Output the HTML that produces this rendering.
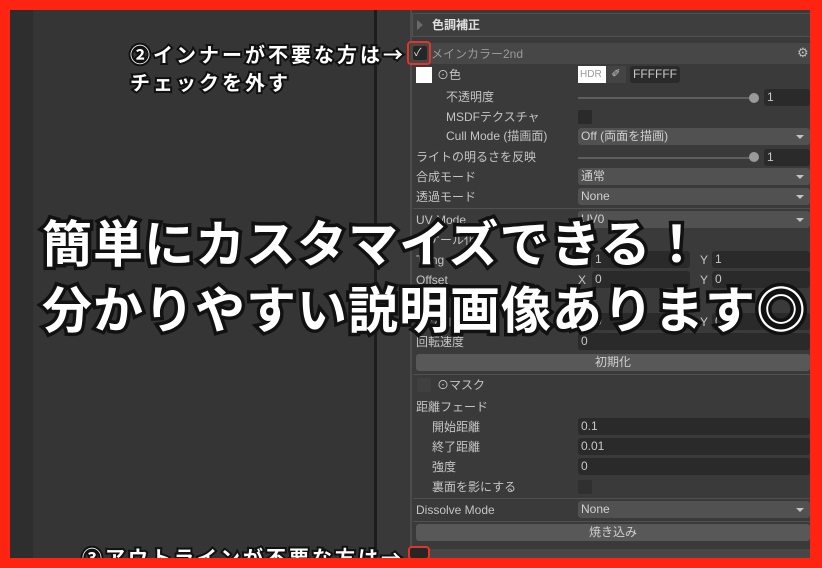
<!DOCTYPE html>
<html><head><meta charset="utf-8"><style>
*{margin:0;padding:0;box-sizing:border-box}
html,body{width:822px;height:568px;overflow:hidden}
body{background:#ff2312;position:relative;font-family:"Liberation Sans","Noto Sans CJK JP",sans-serif}
#w{position:absolute;left:0;top:0;width:822px;height:568px;overflow:hidden}
.a{position:absolute}
.lb{position:absolute;font-size:12px;color:#c4c4c4;line-height:16px;white-space:nowrap}
.in{position:absolute;height:17px;background:#2a2a2a;border-radius:3px;font-size:12px;color:#c8c8c8;line-height:17px;padding-left:3px}
.dd{position:absolute;height:17px;background:#515151;border-radius:3px;font-size:12px;color:#d0d0d0;line-height:17px;padding-left:3px;left:578px;width:232px}
.dd:after{content:"";position:absolute;right:6px;top:7px;border:4px solid transparent;border-top:4px solid #c4c4c4;border-bottom:0}
.btn{position:absolute;left:416px;width:394px;height:17px;background:#585858;border-radius:3px;font-size:12px;color:#d0d0d0;line-height:17px;text-align:center}
.sl{position:absolute;left:578px;width:176px;height:2px;background:#5e5e5e}
.kn{position:absolute;width:10px;height:10px;border-radius:50%;background:#9a9a9a}
.cb{position:absolute;width:14px;height:14px;background:#2a2a2a;border-radius:2px}
.sep{position:absolute;left:413px;width:397px;height:1px;background:#505050}
.big{position:absolute;left:42px;font-size:50px;font-weight:bold;color:#fff;white-space:nowrap;-webkit-text-stroke:7px #111;paint-order:stroke fill;line-height:50px;letter-spacing:1px}
.ann{position:absolute;font-size:20px;font-weight:bold;color:#fff;white-space:nowrap;-webkit-text-stroke:4px #111;paint-order:stroke fill;letter-spacing:3px;line-height:22px;height:22px;overflow:visible}
.arr{font-family:"Noto Sans CJK JP",sans-serif;font-weight:bold}
</style></head><body><div id="w">
<div class="a" style="left:10px;top:10px;width:800px;height:548px;background:#353535"></div>
<div class="a" style="left:10px;top:10px;width:23px;height:548px;background:#2e2e2e"></div>
<div class="a" style="left:374px;top:10px;width:3px;height:548px;background:#1c1c1c"></div>
<div class="a" style="left:377px;top:10px;width:33px;height:548px;background:#393939"></div>
<div class="a" style="left:410px;top:10px;width:400px;height:548px;background:#3a3a3a;border-left:2px solid #4c4c4c"></div>
<div class="a" style="left:412px;top:13px;width:398px;height:24px;background:#3e3e3e;border:1px solid #505050;border-right:0"></div>
<div class="a" style="left:417px;top:20px;border:5px solid transparent;border-left:6px solid #6a6a6a;border-right:0"></div>
<div class="lb" style="left:432px;top:17px;color:#e0e0e0;font-weight:bold">色調補正</div>
<div class="a" style="left:410px;top:43px;width:400px;height:21px;background:#474747"></div>
<div class="a" style="left:407px;top:41px;width:24px;height:24px;border:2px solid #e2352a;border-radius:4px"></div>
<div class="cb" style="left:413px;top:46px;background:#262626"></div>
<div class="lb" style="left:414px;top:45px;font-size:11px;color:#ddd">✓</div>
<div class="lb" style="left:431px;top:46px;color:#9a9a9a">メインカラー2nd</div>
<div class="lb" style="left:797px;top:45px;color:#bbb;font-size:13px">⚙</div>
<div class="a" style="left:416px;top:67px;width:16px;height:16px;background:#fff"></div>
<div class="lb" style="left:437px;top:67px">⊙色</div>
<div class="a" style="left:578px;top:66px;width:28px;height:17px;background:#fff;font-size:10px;color:#999;line-height:17px;padding-left:2px">HDR</div>
<div class="a" style="left:606px;top:66px;width:20px;height:17px;background:#444;color:#ccc;font-size:11px;text-align:center;line-height:17px">✐</div>
<div class="in" style="left:630px;top:66px;width:50px">FFFFFF</div>
<div class="lb" style="left:446px;top:89px">不透明度</div>
<div class="sl" style="top:97px"></div><div class="kn" style="left:749px;top:93px"></div>
<div class="in" style="left:764px;top:89px;width:46px">1</div>
<div class="lb" style="left:446px;top:109px">MSDFテクスチャ</div>
<div class="cb" style="left:578px;top:110px"></div>
<div class="lb" style="left:446px;top:128px">Cull Mode (描画面)</div>
<div class="dd" style="top:128px">Off (両面を描画)</div>
<div class="lb" style="left:416px;top:149px">ライトの明るさを反映</div>
<div class="sl" style="top:157px"></div><div class="kn" style="left:749px;top:152px"></div>
<div class="in" style="left:764px;top:149px;width:46px">1</div>
<div class="lb" style="left:416px;top:169px">合成モード</div>
<div class="dd" style="top:168px">通常</div>
<div class="lb" style="left:416px;top:189px">透過モード</div>
<div class="dd" style="top:188px">None</div>
<div class="sep" style="top:208px"></div>
<div class="lb" style="left:416px;top:212px">UV Mode</div>
<div class="dd" style="top:211px">UV0</div>
<div class="lb" style="left:416px;top:232px">スケール化</div>
<div class="lb" style="left:416px;top:252px">Tiling</div>
<div class="in" style="left:592px;top:251px;width:98px">1</div>
<div class="lb" style="left:700px;top:252px">Y</div>
<div class="in" style="left:712px;top:251px;width:98px">1</div>
<div class="lb" style="left:416px;top:272px">Offset</div>
<div class="lb" style="left:578px;top:272px">X</div>
<div class="in" style="left:592px;top:271px;width:98px">0</div>
<div class="lb" style="left:700px;top:272px">Y</div>
<div class="in" style="left:712px;top:271px;width:98px">0</div>
<div class="lb" style="left:416px;top:314px">スクロール</div>
<div class="lb" style="left:578px;top:314px">X</div>
<div class="in" style="left:592px;top:313px;width:98px">0</div>
<div class="lb" style="left:700px;top:314px">Y</div>
<div class="in" style="left:712px;top:313px;width:98px">0</div>
<div class="lb" style="left:416px;top:334px">回転速度</div>
<div class="in" style="left:578px;top:333px;width:232px">0</div>
<div class="btn" style="top:354px">初期化</div>
<div class="sep" style="top:374px"></div>
<div class="cb" style="left:417px;top:378px;background:#404040"></div>
<div class="lb" style="left:437px;top:377px">⊙マスク</div>
<div class="lb" style="left:416px;top:399px">距離フェード</div>
<div class="lb" style="left:432px;top:419px">開始距離</div>
<div class="in" style="left:578px;top:418px;width:232px">0.1</div>
<div class="lb" style="left:432px;top:439px">終了距離</div>
<div class="in" style="left:578px;top:438px;width:232px">0.01</div>
<div class="lb" style="left:432px;top:459px">強度</div>
<div class="in" style="left:578px;top:458px;width:232px">0</div>
<div class="lb" style="left:432px;top:479px">裏面を影にする</div>
<div class="cb" style="left:578px;top:480px;background:#303030"></div>
<div class="sep" style="top:498px"></div>
<div class="lb" style="left:416px;top:502px">Dissolve Mode</div>
<div class="dd" style="top:501px">None</div>
<div class="sep" style="top:521px"></div>
<div class="btn" style="top:524px">焼き込み</div>
<div class="a" style="left:410px;top:549px;width:400px;height:9px;background:#474747"></div>
<div class="a" style="left:408px;top:546px;width:22px;height:14px;border:2px solid #e2352a;border-radius:4px;background:#262626"></div>
<div class="ann" style="left:130px;top:43px">②インナーが不要な方は<span class="arr">→</span></div>
<div class="ann" style="left:130px;top:73px">チェックを外す</div>
<div class="ann" style="left:82px;top:546px">③アウトラインが不要な方は<span class="arr">→</span></div>
<div class="big" style="top:220px">簡単にカスタマイズできる！</div>
<div class="big" style="top:286px">分かりやすい説明画像あります◎</div>
<div class="a" style="left:0;top:0;width:822px;height:10px;background:#ff2312"></div>
<div class="a" style="left:0;top:558px;width:822px;height:10px;background:#ff2312"></div>
<div class="a" style="left:0;top:0;width:10px;height:568px;background:#ff2312"></div>
<div class="a" style="left:810px;top:0;width:12px;height:568px;background:#ff2312"></div>
</div></body></html>
